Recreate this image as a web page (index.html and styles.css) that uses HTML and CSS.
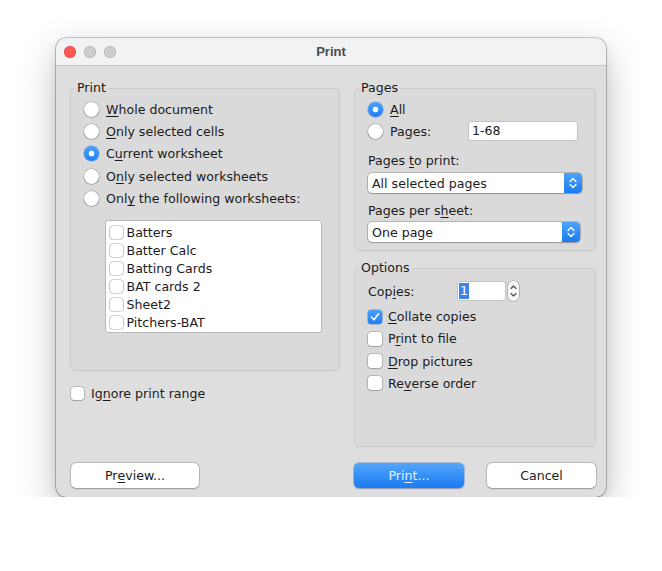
FILE: index.html
```html
<!DOCTYPE html>
<html>
<head>
<meta charset="utf-8">
<title>Print</title>
<link rel="stylesheet" href="styles.css">
</head>
<body>
<div class="window">
  <div class="titlebar">
    <div class="lights"><span class="light red"></span><span class="light"></span><span class="light"></span></div>
    <div class="title">Print</div>
    <div></div>
  </div>
  <div class="content">
    <div class="columns">
      <div class="col-left">
        <fieldset class="group">
          <legend>Print</legend>
          <div class="group-body print-body">
            <div class="radio-row"><span class="radio"></span><span><u>W</u>hole document</span></div>
            <div class="radio-row"><span class="radio"></span><span><u>O</u>nly selected cells</span></div>
            <div class="radio-row"><span class="radio on"></span><span>C<u>u</u>rrent worksheet</span></div>
            <div class="radio-row"><span class="radio"></span><span>O<u>n</u>ly selected worksheets</span></div>
            <div class="radio-row"><span class="radio"></span><span>Onl<u>y</u> the following worksheets:</span></div>
            <div class="list">
              <div class="list-item"><span class="check small"></span>Batters</div>
              <div class="list-item"><span class="check small"></span>Batter Calc</div>
              <div class="list-item"><span class="check small"></span>Batting Cards</div>
              <div class="list-item"><span class="check small"></span>BAT cards 2</div>
              <div class="list-item"><span class="check small"></span>Sheet2</div>
              <div class="list-item"><span class="check small"></span>Pitchers-BAT</div>
            </div>
          </div>
        </fieldset>
        <div class="check-row ignore"><span class="check"></span><span>Ig<u>n</u>ore print range</span></div>
      </div>
      <div class="col-right">
        <fieldset class="group">
          <legend>Pages</legend>
          <div class="group-body pages-body">
            <div class="radio-row"><span class="radio on"></span><span><u>A</u>ll</span></div>
            <div class="radio-row"><span class="radio"></span><span>Pages:</span><span class="textfield">1-68</span></div>
            <div class="label first">Pages <u>t</u>o print:</div>
            <div class="combo combo-a">
              <span class="combo-text">All selected pages</span>
              <span class="combo-btn"><svg width="18" height="20" viewBox="0 0 18 20"><path d="M6 8.5 9 5.5 12 8.5M6 11.5 9 14.5 12 11.5" fill="none" stroke="#fff" stroke-width="1.3" stroke-linecap="round" stroke-linejoin="round"/></svg></span>
            </div>
            <div class="label second">Pages per s<u>h</u>eet:</div>
            <div class="combo combo-b">
              <span class="combo-text">One page</span>
              <span class="combo-btn"><svg width="18" height="20" viewBox="0 0 18 20"><path d="M6 8.5 9 5.5 12 8.5M6 11.5 9 14.5 12 11.5" fill="none" stroke="#fff" stroke-width="1.3" stroke-linecap="round" stroke-linejoin="round"/></svg></span>
            </div>
          </div>
        </fieldset>
        <fieldset class="group options">
          <legend>Options</legend>
          <div class="group-body options-body">
            <div class="copies-row">
              <span class="copies-label">Cop<u>i</u>es:</span>
              <span class="spinfield"><span class="sel">1</span></span>
              <span class="stepper"><svg width="11" height="20" viewBox="0 0 11 20"><path d="M3 7.5 5.5 5 8 7.5M3 12.5 5.5 15 8 12.5" fill="none" stroke="#444" stroke-width="1.1" stroke-linecap="round" stroke-linejoin="round"/></svg></span>
            </div>
            <div class="check-row opt first"><span class="check on"><svg width="14" height="14" viewBox="0 0 14 14"><path d="M3.5 7.2 6 9.8 10.5 3.8" fill="none" stroke="#fff" stroke-width="1.6" stroke-linecap="round" stroke-linejoin="round"/></svg></span><span><u>C</u>ollate copies</span></div>
            <div class="check-row opt"><span class="check"></span><span>P<u>r</u>int to file</span></div>
            <div class="check-row opt"><span class="check"></span><span><u>D</u>rop pictures</span></div>
            <div class="check-row opt"><span class="check"></span><span>Re<u>v</u>erse order</span></div>
          </div>
        </fieldset>
      </div>
    </div>
    <div class="buttons">
      <div class="btn preview">Pr<u>e</u>view...</div>
      <div class="btn-group">
        <div class="btn primary">Pri<u>n</u>t...</div>
        <div class="btn cancel">Cancel</div>
      </div>
    </div>
  </div>
</div>
</body>
</html>
```
FILE: styles.css
```css
html, body {
  margin: 0;
  background: #ffffff;
}
body {
  padding: 38px 0 0 56px;
  font-family: "DejaVu Sans", sans-serif;
  font-size: 12.6px;
  color: #1c1c1c;
}
u {
  text-decoration: underline;
  text-underline-offset: 2px;
  text-decoration-thickness: 1px;
}
.window {
  width: 550px;
  height: 459px;
  box-sizing: border-box;
  border-radius: 10px;
  background: #dedede;
  overflow: hidden;
  box-shadow: 0 0 0 0.6px rgba(0,0,0,0.38), 0 14px 36px rgba(0,0,0,0.26), 0 2px 8px rgba(0,0,0,0.08);
}
.titlebar {
  height: 27px;
  border-bottom: 1px solid #c4c4c4;
  background: #f1f2f4;
  display: grid;
  grid-template-columns: 1fr auto 1fr;
  align-items: center;
}
.lights {
  display: flex;
  gap: 8px;
  padding-left: 8px;
}
.light {
  width: 12px;
  height: 12px;
  border-radius: 50%;
  background: #cdcdcf;
  box-shadow: inset 0 0 0 0.6px rgba(0,0,0,0.18);
}
.light.red {
  background: #fe5a55;
  box-shadow: inset 0 0 0 0.6px rgba(200,40,40,0.5);
}
.title {
  font-family: "Liberation Sans", sans-serif;
  font-weight: bold;
  font-size: 13px;
  color: #4b4b4b;
}
.content {
  padding: 14px 10px 0 14px;
}
.columns {
  display: flex;
  gap: 14px;
}
.col-left { width: 270px; }
.col-right { width: 242px; }
fieldset.group {
  margin: 0;
  padding: 0;
  border: 1px solid #c9c9c9;
  border-radius: 5px;
  min-width: 0;
  background: #dadada;
}
fieldset.group.options { margin-top: 9px; }
legend {
  padding: 0 2px;
  margin-left: 4px;
  line-height: 16px;
}
.group-body {
  box-sizing: border-box;
  padding: 2px 0 0 13px;
}
.print-body { height: 274px; }
.pages-body { height: 154px; }
.options-body { height: 170px; padding-top: 5px; }

.radio-row {
  display: flex;
  align-items: center;
  height: 22.4px;
}
.pages-body .radio-row { height: 22px; }
.radio {
  flex: none;
  width: 15px;
  height: 15px;
  border-radius: 50%;
  background: #ffffff;
  box-shadow: 0 0 0 0.6px rgba(0,0,0,0.28), 0 0.6px 1px rgba(0,0,0,0.18);
  margin-right: 7px;
}
.radio.on {
  background: radial-gradient(circle, #ffffff 0 2.6px, rgba(255,255,255,0) 3.2px), linear-gradient(#4aa1fb, #1f7ef2);
  box-shadow: 0 0 0 0.6px rgba(20,90,200,0.5);
}
.list {
  margin: 10px 0 0 21px;
  width: 217px;
  height: 113px;
  box-sizing: border-box;
  background: #ffffff;
  border: 1px solid #b8b8b8;
  border-radius: 3px;
  padding: 3px 0 0 3.5px;
}
.list-item {
  display: flex;
  align-items: center;
  height: 18px;
}
.check {
  flex: none;
  width: 14px;
  height: 14px;
  box-sizing: border-box;
  border-radius: 3px;
  background: #ffffff;
  box-shadow: 0 0 0 0.6px rgba(0,0,0,0.28), 0 0.6px 1px rgba(0,0,0,0.15);
  margin-right: 6px;
  display: flex;
}
.check.small {
  width: 13px;
  height: 13px;
  margin-right: 4px;
  box-shadow: 0 0 0 0.6px rgba(0,0,0,0.35);
}
.check.on {
  background: linear-gradient(#4aa1fb, #1f7ef2);
  box-shadow: 0 0 0 0.6px rgba(20,90,200,0.5);
}
.check-row {
  display: flex;
  align-items: center;
}
.ignore {
  margin-top: 13px;
  height: 18px;
  padding-left: 1px;
}
.ignore .check { width: 13px; height: 13px; margin-right: 7px; }
.textfield {
  margin-left: auto;
  margin-right: 17px;
  width: 110px;
  height: 20px;
  box-sizing: border-box;
  background: #ffffff;
  border: 1px solid #c2c2c2;
  border-radius: 3px;
  padding-left: 3px;
  line-height: 18px;
}
.label {
  height: 16px;
  line-height: 16px;
}
.label.first { margin-top: 11px; }
.label.second { margin-top: 10px; }
.combo {
  display: flex;
  align-items: center;
  height: 20px;
  background: #ffffff;
  border-radius: 4px;
  overflow: hidden;
  box-shadow: 0 0 0 0.6px rgba(0,0,0,0.3), 0 0.6px 1.2px rgba(0,0,0,0.2);
}
.combo-a { width: 214px; margin-top: 4px; }
.combo-b { width: 212px; margin-top: 3px; }
.combo-text {
  flex: 1;
  padding-left: 4px;
}
.combo-btn {
  width: 18px;
  height: 20px;
  background: linear-gradient(#4ea3fb, #1b7bf0);
  display: flex;
}
.copies-row {
  display: flex;
  align-items: center;
  height: 20px;
}
.copies-label { width: 89px; }
.spinfield {
  width: 49px;
  height: 20px;
  box-sizing: border-box;
  background: #ffffff;
  border: 1px solid #c2c2c2;
  border-radius: 3px;
  padding: 1px 0 0 1px;
}
.sel {
  display: inline-block;
  height: 16px;
  line-height: 16px;
  padding: 0 1px 0 1px;
  background: #3d84ea;
  color: #ffffff;
}
.stepper {
  margin-left: 2px;
  width: 11px;
  height: 20px;
  box-sizing: border-box;
  background: #f6f6f6;
  border-radius: 5px;
  box-shadow: 0 0 0 0.6px rgba(0,0,0,0.3);
  display: flex;
}
.opt { height: 22.2px; }
.opt.first { margin-top: 4.6px; }
.buttons {
  margin-top: 16px;
  display: flex;
  justify-content: space-between;
}
.btn-group {
  display: flex;
  gap: 23px;
}
.btn {
  height: 25px;
  box-sizing: border-box;
  background: #ffffff;
  border-radius: 5px;
  box-shadow: 0 0 0 0.6px rgba(0,0,0,0.25), 0 0.6px 1.5px rgba(0,0,0,0.2);
  display: flex;
  align-items: center;
  justify-content: center;
}
.preview { width: 128px; margin-left: 1px; }
.primary {
  width: 110px;
  background: linear-gradient(#55a6fb, #1b7af0);
  color: rgba(255,255,255,0.88);
  box-shadow: 0 0 0 0.6px rgba(20,90,200,0.45), 0 0.6px 1.5px rgba(0,0,0,0.2);
}
.cancel { width: 109px; }
```
